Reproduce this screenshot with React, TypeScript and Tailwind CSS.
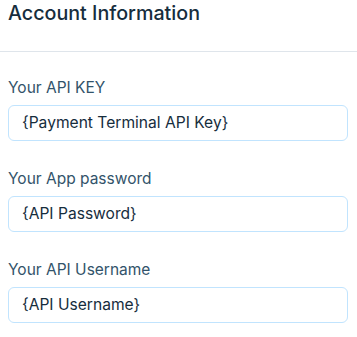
import React from "react";

const fields = [
  { label: "Your API KEY", value: "{Payment Terminal API Key}" },
  { label: "Your App password", value: "{API Password}" },
  { label: "Your API Username", value: "{API Username}" },
];

export default function App() {
  return (
    <div
      className="w-[357px] h-[337px] bg-white overflow-hidden"
      style={{ fontFamily: "Inter, 'Noto Sans', sans-serif" }}
    >
      <div className="h-[52px] border-b border-[#dfe5eb] px-2 pt-[1px]">
        <h2 className="text-[19.7px] leading-[24px] font-medium text-[#162d3d]">
          Account Information
        </h2>
      </div>
      <div className="px-2 pt-[24px] flex flex-col gap-[26px]">
        {fields.map((f) => (
          <div key={f.label} className="flex flex-col gap-[5px]">
            <label className="text-[15.5px] leading-[24px] text-[#32536a]">
              {f.label}
            </label>
            <div className="h-[36px] w-[340px] rounded-[6px] border border-[#c1e4fe] bg-white flex items-center pl-[13px] text-[15.6px] text-[#162d3d]">
              {f.value}
            </div>
          </div>
        ))}
      </div>
    </div>
  );
}
